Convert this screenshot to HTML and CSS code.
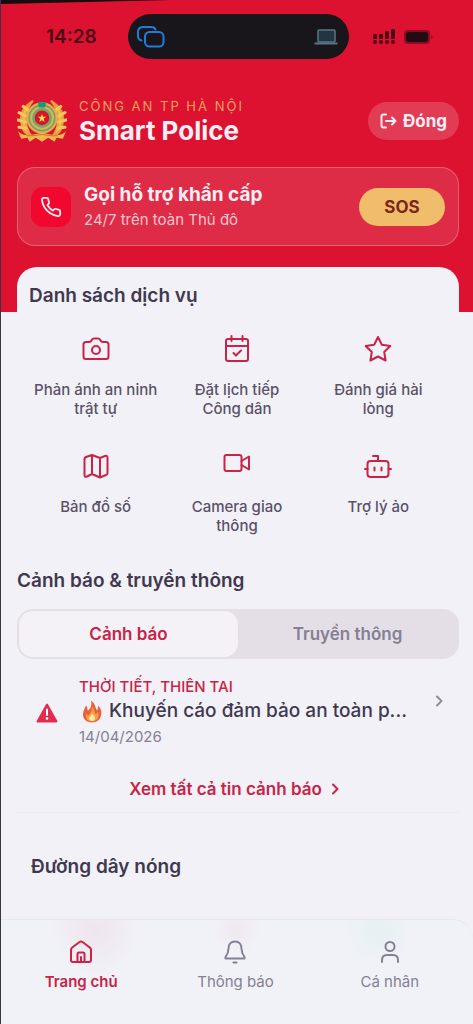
FILE: index.html
```html
<!DOCTYPE html>
<html lang="vi">
  <head>
    <meta charset="UTF-8" />
    <meta name="viewport" content="width=device-width, initial-scale=1" />
    <title>Smart Police</title>
    <link rel="stylesheet" href="styles.css">
  </head>
  <body>
    <header class="hero">
      <div class="status-bar">
        <span class="status-time">14:28</span>
        <div class="island">
          <svg class="island-mirror" viewBox="0 0 28 22" fill="none" stroke="#1c7fe0" stroke-width="2" stroke-linecap="round" stroke-linejoin="round">
            <path d="M4.500 14.500C2.500 14 1 12.500 1 10V6C1 3 3 1 6 1H14C16.500 1 18 2 18.500 3.500" />
            <rect x="8" y="6" width="18.500" height="14.500" rx="4.500" />
          </svg>
          <svg class="island-laptop" viewBox="0 0 24 16" fill="none" stroke="#587584" stroke-width="1.500">
            <rect x="4" y="1" width="17" height="12" rx="1" fill="#223642" />
            <path d="M0.500 14.500H23.500" stroke-width="2" />
          </svg>
        </div>
        <div class="status-icons">
          <svg width="23" height="16" viewBox="0 0 23 16" fill="#4b0715">
            <rect x="0" y="5" width="4" height="5" rx="1" />
            <rect x="6" y="5" width="4" height="5" rx="1" />
            <rect x="12" y="2" width="4" height="8" rx="1" />
            <rect x="18" y="0" width="4" height="10" rx="1" />
            <circle cx="2" cy="13" r="2" />
            <circle cx="8" cy="13" r="2" />
            <circle cx="14" cy="13" r="2" />
            <circle cx="20" cy="13" r="2" />
          </svg>
          <svg width="30" height="14" viewBox="0 0 30 14">
            <rect x="0" y="0" width="26" height="14" rx="4" fill="#8c0c22" />
            <rect x="2" y="2" width="22" height="10" rx="3" fill="#230b12" />
            <path d="M27 5L29 7L27 9Z" fill="#8c0c22" />
          </svg>
        </div>
      </div>

      <div class="brand">
        <svg class="brand-logo" viewBox="0 0 48 44" fill="none">
          <path d="M15 3C7 8 3 14 4 22C4 29 8 35 15 38C10 32 8 27 9 20C9 13 11 8 15 3Z" fill="#f0b84f" stroke="#e5a040" stroke-width="2" stroke-linejoin="round" />
          <path d="M33 3C41 8 45 14 44 22C44 29 40 35 33 38C38 32 40 27 39 20C39 13 37 8 33 3Z" fill="#f0b84f" stroke="#e5a040" stroke-width="2" stroke-linejoin="round" />
          <path d="M2 14L8 17M1 21L8 23M2 28L9 29M6 8L11 12M46 14L40 17M47 21L40 23M46 28L39 29M42 8L37 12" stroke="#f4c75a" stroke-width="3" stroke-linecap="round" />
          <circle cx="24" cy="19" r="15" fill="#e8ad4c" />
          <circle cx="24" cy="19" r="13" fill="#6fa36b" />
          <circle cx="24" cy="19" r="10.500" stroke="#d9b558" stroke-width="2" />
          <circle cx="24" cy="19" r="8.500" fill="#79a66c" />
          <path d="M20 4H28L27 9H21Z" fill="#0e9c7f" />
          <circle cx="24" cy="19" r="7" fill="#d81528" />
          <path d="M24 15L25 18H28L25.700 19.800L26.500 23L24 21.200L21.500 23L22.300 19.800L20 18H23Z" fill="#ffd65a" />
          <path d="M1 32C8 38 15 35 24 33C33 35 40 38 47 32L44 39L38 38L36 42L30 38L24 42L18 38L12 42L10 38L4 39Z" fill="#f0b84f" />
          <path d="M9 36C15 37 19 35 24 35C29 35 33 37 39 36" stroke="#c97827" />
        </svg>
        <div class="brand-text">
          <p class="brand-eyebrow">CÔNG AN TP HÀ NỘI</p>
          <h1 class="brand-title">Smart Police</h1>
        </div>
        <button type="button" class="close-button">
          <svg width="17" height="16" viewBox="0 0 17 16" fill="none" stroke="currentColor" stroke-width="2" stroke-linecap="round" stroke-linejoin="round">
            <path d="M6 1.500H3.500Q1.500 1.500 1.500 3.500V12.500Q1.500 14.500 3.500 14.500H6" />
            <path d="M6 8H15.500M12 4.500L15.500 8L12 11.500" />
          </svg>
          Đóng
        </button>
      </div>

      <section class="sos-card">
        <div class="sos-icon">
          <svg width="22" height="22" viewBox="0 0 24 24" fill="none" stroke="currentColor" stroke-width="2" stroke-linecap="round" stroke-linejoin="round">
            <path d="M22 16.920v3a2 2 0 0 1-2.180 2 19.790 19.790 0 0 1-8.630-3.070 19.500 19.500 0 0 1-6-6 19.790 19.790 0 0 1-3.070-8.670A2 2 0 0 1 4.110 2h3a2 2 0 0 1 2 1.720c.127.960.361 1.903.700 2.810a2 2 0 0 1-.450 2.110L8.090 9.910a16 16 0 0 0 6 6l1.270-1.270a2 2 0 0 1 2.110-.450c.907.339 1.850.573 2.810.700A2 2 0 0 1 22 16.920z" />
          </svg>
        </div>
        <div class="sos-text">
          <h2 class="sos-title">Gọi hỗ trợ khẩn cấp</h2>
          <p class="sos-subtitle">24/7 trên toàn Thủ đô</p>
        </div>
        <button type="button" class="sos-button">SOS</button>
      </section>
    </header>

    <main class="content">
      <section class="services">
        <h2 class="section-title">Danh sách dịch vụ</h2>
        <div class="service-grid">
          <a href="#" class="service">
            <svg class="service-icon" viewBox="0 0 28 28">
              <path d="M4 7H7C8.500 7 9 6.500 9.500 5.500C10 4 10.500 3.500 12 3.500H16C17.500 3.500 18 4 18.500 5.500C19 6.500 19.500 7 21 7H24Q26.500 7 26.500 9.500V21.500Q26.500 24 24 24H4Q1.500 24 1.500 21.500V9.500Q1.500 7 4 7Z" />
              <circle cx="14" cy="15" r="4" />
            </svg>
            <span>Phản ánh an ninh<br />trật tự</span>
          </a>
          <a href="#" class="service">
            <svg class="service-icon" viewBox="0 0 28 28">
              <rect x="3" y="4" width="22" height="22" rx="2" />
              <path d="M3 11H25M8.500 1V6M19.500 1V6M10.500 18L13 20.500L18 15.500" />
            </svg>
            <span>Đặt lịch tiếp<br />Công dân</span>
          </a>
          <a href="#" class="service">
            <svg class="service-icon" viewBox="0 0 28 28">
              <path d="M14 2L17.800 9.700L26.300 11L20.200 17L21.600 25.500L14 21.500L6.400 25.500L7.800 17L1.700 11L10.200 9.700Z" />
            </svg>
            <span>Đánh giá hài<br />lòng</span>
          </a>
          <a href="#" class="service">
            <svg class="service-icon" viewBox="0 0 28 28">
              <path d="M4 5L10 3L18 6L23 4Q25.500 3 25.500 6V21Q25.500 22.500 24 23L18 25.500L10 22L5 24.500Q2.500 25.500 2.500 23V7Q2.500 5.500 4 5ZM10 3V22M18 6V25.500" />
            </svg>
            <span>Bản đồ số</span>
          </a>
          <a href="#" class="service">
            <svg class="service-icon" viewBox="0 0 28 28">
              <rect x="1.500" y="3" width="17" height="16" rx="2" />
              <path d="M18.500 9L26 4.500V17.500L18.500 13" />
            </svg>
            <span>Camera giao<br />thông</span>
          </a>
          <a href="#" class="service">
            <svg class="service-icon" viewBox="0 0 28 28">
              <rect x="3.500" y="9" width="21" height="16" rx="3" />
              <path d="M14 9V4H9M1 17H3.500M24.500 17H27M10.500 15.500V18.500M17.500 15.500V18.500" />
            </svg>
            <span>Trợ lý ảo</span>
          </a>
        </div>
      </section>

      <section class="news">
        <h2 class="section-title">Cảnh báo &amp; truyền thông</h2>
        <div class="tabs" role="tablist">
          <button type="button" class="tab active" role="tab" aria-selected="true">Cảnh báo</button>
          <button type="button" class="tab" role="tab" aria-selected="false">Truyền thông</button>
        </div>
        <a href="#" class="news-item">
          <svg class="news-alert" viewBox="0 0 22 20">
            <path d="M11 1.500L20.500 18.500H1.500Z" fill="#e22c50" stroke="#e22c50" stroke-width="2" stroke-linejoin="round" />
            <path d="M11 6.500V12" stroke="#fff" stroke-width="2" stroke-linecap="round" />
            <circle cx="11" cy="15.500" r="1.300" fill="#fff" />
          </svg>
          <div class="news-body">
            <span class="news-category">THỜI TIẾT, THIÊN TAI</span>
            <span class="news-headline">
              <svg class="news-fire" viewBox="0 0 20 22">
                <path d="M9 0C14 4 13 7 15 10C16 9 16 7 16 5C19 8 20 11 19 15C18 19 15 22 10 22C4 22 1 18 1 14C1 10 3 8 4 5C6 7 5 9 6 10C9 8 10 4 9 0Z" fill="#ec5d3c" />
                <path d="M10 6C13 9 12 12 14 14L16 11C18 16 15 21 10 21C6 21 3 18 4 13L6 15C9 13 10 10 10 6Z" fill="#f7a044" />
                <path d="M10 13C13 16 14 18 12 20C10 21 7 20 7 18C7 16 10 15 10 13Z" fill="#ffe8a0" />
              </svg>
              <span class="news-title">Khuyến cáo đảm bảo an toàn p...</span>
            </span>
            <time class="news-date" datetime="2026-04-14">14/04/2026</time>
          </div>
          <svg class="news-chevron" viewBox="0 0 8 12">
            <path d="M2 1.500L6.500 6L2 10.500" />
          </svg>
        </a>
        <a href="#" class="news-more">
          Xem tất cả tin cảnh báo
          <svg width="8" height="12" viewBox="0 0 8 12">
            <path d="M2 1.500L6.500 6L2 10.500" />
          </svg>
        </a>
      </section>

      <section class="hotline">
        <h2 class="section-title">Đường dây nóng</h2>
      </section>
    </main>

    <nav class="bottom-nav">
      <a href="#" class="nav-item active">
        <svg class="nav-icon" viewBox="0 0 24 24">
          <path d="M2 10Q2 8.500 3.200 7.500L10.500 2Q12 1 13.500 2L20.800 7.500Q22 8.500 22 10V20Q22 22 20 22H4Q2 22 2 20Z" />
          <path d="M8.500 22V14Q8.500 12.500 10 12.500H14Q15.500 12.500 15.500 14V22M12 17V22" />
        </svg>
        Trang chủ
      </a>
      <a href="#" class="nav-item">
        <svg class="nav-icon" viewBox="0 0 24 24">
          <path d="M12 1.500C8 1.500 5.500 4.500 5.500 8.500C5.500 13 4 15 2.500 17V18.500H21.500V17C20 15 18.500 13 18.500 8.500C18.500 4.500 16 1.500 12 1.500ZM10.500 22.500H13.500" />
        </svg>
        Thông báo
      </a>
      <a href="#" class="nav-item">
        <svg class="nav-icon" viewBox="0 0 24 24">
          <circle cx="12" cy="6.500" r="4.500" />
          <path d="M4 22V20Q4 15 9 15H15Q20 15 20 20V22" />
        </svg>
        Cá nhân
      </a>
    </nav>
  </body>
</html>
```
FILE: styles.css
```css
:root {
  --red: #dc1230;
  --accent: #c92346;
  --gold: #f0bd6b;
  --page: #f1f1f7;
  --text: #40384f;
  --text-muted: #858094;
}

* {
  margin: 0;
  padding: 0;
  box-sizing: border-box;
}

body {
  min-height: 100vh;
  display: flex;
  flex-direction: column;
  font-family: Inter, "Noto Sans", sans-serif;
  color: var(--text);
  background-color: var(--page);
  border-left: 1px solid #3b3547;
}

a {
  color: inherit;
  text-decoration: none;
}

button {
  font-family: inherit;
  border: none;
  cursor: pointer;
}

/* Header */
.hero {
  position: relative;
  padding: 14px 14px 66px 16px;
  background-color: var(--red);
}

/* bezel edge at the top left corner */
.hero::before {
  content: "";
  position: absolute;
  top: 0;
  left: 0;
  width: 36%;
  height: 4px;
  background-color: #170b10;
  clip-path: polygon(0 0, 100% 0, 0 100%);
}

.status-bar {
  display: grid;
  grid-template-columns: 1fr 221px 1fr;
  align-items: center;
}

.status-time {
  padding-left: 29px;
  font-size: 19px;
  font-weight: 600;
  color: #4b0715;
}

.island {
  height: 45px;
  display: flex;
  align-items: center;
  justify-content: space-between;
  padding: 0 11px 0 9px;
  border-radius: 23px;
  background-color: #18151b;
}

.island-mirror {
  width: 28px;
  height: 22px;
}

.island-laptop {
  width: 24px;
  height: 16px;
}

.status-icons {
  display: flex;
  align-items: center;
  gap: 8px;
  padding-left: 24px;
}

.brand {
  display: flex;
  align-items: center;
  margin-top: 37px;
}

.brand-logo {
  flex: none;
  width: 50px;
  height: 46px;
}

.brand-text {
  flex: 1;
  padding-left: 12px;
}

.brand-eyebrow {
  font-size: 13px;
  line-height: 20px;
  letter-spacing: 2px;
  color: #f2a05c;
}

.brand-title {
  font-size: 26px;
  line-height: 30px;
  font-weight: 700;
  color: #fbeef4;
}

.close-button {
  display: flex;
  align-items: center;
  gap: 6px;
  height: 38px;
  padding: 0 12px;
  border-radius: 19px;
  font-size: 17px;
  font-weight: 700;
  color: #fbeef4;
  background-color: rgba(255, 255, 255, 0.18);
}

.sos-card {
  display: flex;
  align-items: center;
  height: 79px;
  margin-top: 21px;
  padding: 0 13px;
  border: 1px solid rgba(255, 255, 255, 0.25);
  border-radius: 18px;
  background-color: rgba(255, 255, 255, 0.11);
}

.sos-icon {
  width: 40px;
  height: 40px;
  display: flex;
  align-items: center;
  justify-content: center;
  border-radius: 12px;
  color: #fbeef4;
  background-color: #f2082f;
}

.sos-text {
  flex: 1;
  padding-left: 13px;
}

.sos-title {
  font-size: 19px;
  line-height: 26px;
  font-weight: 700;
  color: #fbeef4;
}

.sos-subtitle {
  font-size: 15px;
  line-height: 24px;
  color: #f6c3d0;
}

.sos-button {
  width: 86px;
  height: 38px;
  border-radius: 19px;
  font-size: 17px;
  font-weight: 700;
  color: #7c2519;
  background-color: var(--gold);
}

/* Content */
.content {
  flex: 1;
  position: relative;
  margin-top: -45px;
  padding: 0 14px 0 16px;
}

.section-title {
  font-size: 19px;
  line-height: 26px;
  font-weight: 600;
}

.services {
  padding: 16px 10px 0 8px;
  border-radius: 20px 20px 0 0;
  background-color: var(--page);
}

.services .section-title {
  padding-left: 4px;
}

.service-grid {
  display: grid;
  grid-template-columns: repeat(3, 1fr);
  row-gap: 34px;
  margin-top: 26px;
}

.service {
  display: flex;
  flex-direction: column;
  align-items: center;
  font-size: 15px;
  line-height: 19px;
  font-weight: 500;
  text-align: center;
  color: #5b5169;
}

.service-icon {
  flex: none;
  width: 28px;
  height: 28px;
  margin-bottom: 17px;
}

.service-icon,
.nav-icon,
.news-chevron,
.news-more svg {
  fill: none;
  stroke: var(--accent);
  stroke-width: 2;
  stroke-linecap: round;
  stroke-linejoin: round;
}

.news {
  margin-top: 33px;
  padding-bottom: 10px;
  border-bottom: 1px solid #eaeaf1;
}

.tabs {
  display: flex;
  height: 50px;
  margin-top: 15px;
  padding: 2px;
  border-radius: 16px;
  background-color: #e4dfe7;
}

.tab {
  flex: 1;
  border-radius: 14px;
  font-size: 17px;
  font-weight: 600;
  color: var(--text-muted);
  background-color: transparent;
}

.tab.active {
  color: var(--accent);
  background-color: #f4f2f7;
}

.news-item {
  display: flex;
  align-items: center;
  margin-top: 18px;
  padding: 0 16px 0 19px;
}

.news-alert {
  flex: none;
  width: 22px;
  height: 20px;
}

.news-body {
  flex: 1;
  min-width: 0;
  display: flex;
  flex-direction: column;
  padding: 0 20px 0 21px;
}

.news-category {
  font-size: 15px;
  line-height: 20px;
  font-weight: 500;
  color: var(--accent);
}

.news-headline {
  display: flex;
  align-items: center;
  gap: 7px;
  padding-left: 3px;
}

.news-fire {
  flex: none;
  width: 20px;
  height: 23px;
}

.news-title {
  font-size: 19px;
  line-height: 28px;
  font-weight: 500;
  white-space: nowrap;
}

.news-date {
  font-size: 15px;
  line-height: 24px;
  color: var(--text-muted);
}

.news-chevron {
  flex: none;
  width: 8px;
  height: 12px;
  margin-bottom: 24px;
  stroke: #918c9b;
}

.news-more {
  display: flex;
  align-items: center;
  justify-content: center;
  gap: 9px;
  margin-top: 27px;
  padding-right: 8px;
  font-size: 17px;
  line-height: 26px;
  font-weight: 600;
  color: var(--accent);
}

.hotline {
  padding: 41px 14px 30px;
}

/* Bottom navigation */
.bottom-nav {
  display: grid;
  grid-template-columns: repeat(3, 1fr);
  padding: 20px 6px 30px 3px;
  border-top: 1px solid #e6e7ef;
  border-radius: 0 20px 0 0;
  background:
    radial-gradient(circle at 20% 10%, #efe4ee, transparent 12%),
    radial-gradient(circle at 50% 10%, #efe8ef, transparent 10%),
    radial-gradient(circle at 80% 10%, #e6f0f2, transparent 10%),
    #f1f2f8;
}

.nav-item {
  display: flex;
  flex-direction: column;
  align-items: center;
  gap: 6px;
  font-size: 15px;
  line-height: 24px;
  color: var(--text-muted);
}

.nav-item.active {
  font-weight: 600;
  color: var(--accent);
}

.nav-icon {
  width: 24px;
  height: 24px;
  stroke: currentColor;
}
```
